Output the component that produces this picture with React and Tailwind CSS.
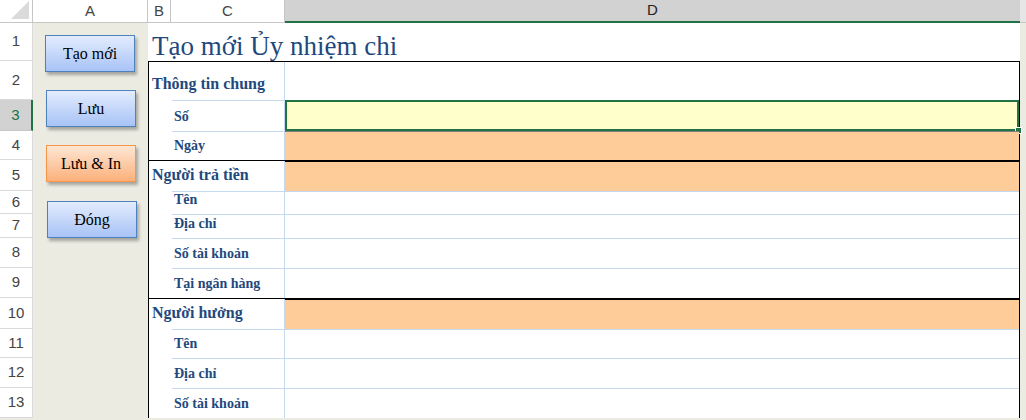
import React from "react";

const rows = [
  { n: 1, h: 38 }, { n: 2, h: 39 }, { n: 3, h: 31 }, { n: 4, h: 29 }, { n: 5, h: 31 },
  { n: 6, h: 23 }, { n: 7, h: 24 }, { n: 8, h: 30 }, { n: 9, h: 30 }, { n: 10, h: 31 },
  { n: 11, h: 29 }, { n: 12, h: 30 }, { n: 13, h: 30 },
];

const content = {
  2: { sec: "Thông tin chung" },
  3: { label: "Số", d: "sel" },
  4: { label: "Ngày", d: "orange" },
  5: { sec: "Người trả tiền", d: "orange", top: true },
  6: { label: "Tên" }, 7: { label: "Địa chỉ" }, 8: { label: "Số tài khoản" }, 9: { label: "Tại ngân hàng" },
  10: { sec: "Người hưởng", d: "orange", top: true },
  11: { label: "Tên" }, 12: { label: "Địa chỉ" }, 13: { label: "Số tài khoản" },
};

function Btn({ text, orange, className }) {
  return (
    <div
      className={`absolute w-[90px] h-[37px] flex items-center justify-center text-[16px] text-black shadow-[2px_3px_3px_rgba(0,0,0,0.3)] border ${
        orange ? "border-[#f79646] bg-gradient-to-b from-[#fde6d4] to-[#fbb07a]" : "border-[#4f81bd] bg-gradient-to-b from-[#e3ecfd] to-[#a8c3f6]"
      } ${className}`}
      style={{ fontFamily: "'Liberation Serif', serif" }}
    >
      {text}
    </div>
  );
}

export default function App() {
  const serif = { fontFamily: "'Liberation Serif', 'DejaVu Serif', serif" };
  return (
    <div className="relative w-[1026px] h-[420px] overflow-hidden bg-[#ecebe2]" style={{ fontFamily: "'Liberation Sans', sans-serif" }}>
      {/* header */}
      <div className="flex h-[23px] bg-[#e6e6e6] text-[15px] text-[#444]">
        <div className="w-[33px] border-r border-b border-[#c6c6c6] relative bg-white">
          <div className="absolute right-[3px] bottom-[3px] w-0 h-0 border-l-[18px] border-l-transparent border-b-[18px] border-b-[#dadada]" />
        </div>
        <div className="w-[115px] flex items-center justify-center border-r border-b border-[#c6c6c6] bg-white">A</div>
        <div className="w-[23px] flex items-center justify-center border-r border-b border-[#c6c6c6] bg-white">B</div>
        <div className="w-[114px] flex items-center justify-center border-r border-b border-[#c6c6c6] bg-white">C</div>
        <div className="w-[735px] flex items-center justify-center bg-[#d2d2d2] border-b-2 border-[#217346] text-[#222]">D</div>
        <div className="flex-1 bg-[#e6e6e6] border-b border-[#c6c6c6]" />
      </div>
      {rows.map((r) => {
        const c = content[r.n] || {};
        const formRow = r.n >= 2;
        return (
          <div key={r.n} className="flex" style={{ height: r.h }}>
            <div className={`w-[33px] flex items-center justify-center text-[15px] border-b border-r ${r.n === 3 ? "bg-[#d2d2d2] text-[#217346] border-r-2 border-r-[#217346] border-b-[#c6c6c6]" : "bg-white text-[#444] border-[#dadada]"}`}>
              {r.n}
            </div>
            <div className="w-[115px] bg-[#ecebe2]" />
            {r.n === 1 ? (
              <div className="w-[872px] bg-white flex items-end pb-[1px] pl-[4px] text-[27px] text-[#1f497d] leading-none" style={serif}>
                Tạo mới Ủy nhiệm chi
              </div>
            ) : (
              <div className={`w-[872px] flex bg-white border-l border-r border-black ${c.top || r.n === 2 ? "border-t" : ""}`}>
                {c.sec ? (
                  <div className="w-[136px] flex items-end pb-[4px] pl-[3px] text-[16px] font-bold text-[#1f497d] whitespace-nowrap border-r border-[#c5d9f1]" style={serif}>
                    {c.sec}
                  </div>
                ) : (
                  <>
                    <div className="w-[23px]" />
                    <div className={`w-[113px] flex items-end pb-[4px] pl-[2px] text-[14px] font-bold text-[#1f497d] whitespace-nowrap border-r border-[#c5d9f1] ${r.n === 2 ? "" : "border-t border-t-[#c5d9f1]"}`} style={serif}>
                      {c.label}
                    </div>
                  </>
                )}
                <div
                  className={`flex-1 relative ${
                    c.d === "sel" ? "bg-[#ffffcc] border-2 border-[#217346]" : c.d === "orange" ? "bg-[#fecc99] border-t border-[#7f7f7f]" : r.n === 2 ? "" : "border-t border-[#c5d9f1]"
                  } ${c.top && c.d === "orange" ? "border-black" : ""}`}
                >
                  {c.d === "sel" && <div className="absolute -right-[5px] -bottom-[5px] w-[7px] h-[7px] bg-[#217346] border border-white" />}
                </div>
              </div>
            )}
            <div className="flex-1 bg-[#ecebe2]" />
          </div>
        );
      })}
      <Btn text="Tạo mới" className="left-[45px] top-[35px]" />
      <Btn text="Lưu" className="left-[46px] top-[90px]" />
      <Btn text="Lưu & In" orange className="left-[46px] top-[145px]" />
      <Btn text="Đóng" className="left-[47px] top-[201px]" />
    </div>
  );
}
